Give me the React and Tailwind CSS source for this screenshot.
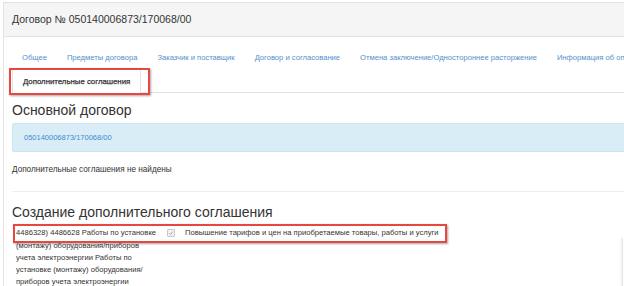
import React from 'react';

const tabs = [
    'Общее',
    'Предметы договора',
    'Заказчик и поставщик',
    'Договор и согласование',
    'Отмена заключение/Одностороннее расторжение',
    'Информация об оплате',
];

const itemLines = [
    '4486328) 4486628 Работы по установке',
    '(монтажу) оборудования/приборов',
    'учета электроэнергии Работы по',
    'установке (монтажу) оборудования/',
    'приборов учета электроэнергии',
];

function CheckMark() {
    return (
        <span className="inline-flex items-center justify-center w-[8px] h-[8px] border border-[#c8c8c8] bg-[#f2f2f2] rounded-[1px]">
            <svg viewBox="0 0 10 10" className="w-[6px] h-[6px]">
                <path d="M2 5.2 L4.2 7.4 L8 2.8" fill="none" stroke="#9a9a9a" strokeWidth="1.4" />
            </svg>
        </span>
    );
}

export default function App() {
    return (
        <div
            className="relative w-[624px] h-[286px] overflow-hidden bg-white text-[#333]"
            style={{ fontFamily: '"Liberation Sans", Arial, sans-serif' }}
        >
            <div className="ml-[3px] mt-[2px] w-[760px] h-[300px] border border-[#e3e3e3]">
                {/* Panel heading */}
                <div className="h-[34px] bg-[#f5f5f5] border-b border-[#e3e3e3] flex items-center pl-[8px] text-[10.5px] text-[#333]">
                    Договор № 050140006873/170068/00
                </div>

                {/* Panel body */}
                <div className="pl-[8px] pt-[10px]">
                    {/* Tabs */}
                    <div className="border-b border-[#e3e3e3]">
                        <div className="flex h-[22px] items-center text-[7.6px] text-[#5190cd] whitespace-nowrap">
                            {tabs.map((t) => (
                                <span key={t} className="px-[10px]">{t}</span>
                            ))}
                        </div>
                        <div className="flex h-[23px]">
                            <div className="relative -mb-px flex items-center px-[10px] bg-white border border-b-0 border-[#e3e3e3] text-[7.8px] text-[#333] [-webkit-text-stroke:0.25px_#333]">
                                Дополнительные соглашения
                                <div className="absolute -left-[4px] -top-[2px] w-[141px] h-[27px] border-2 border-[#e8473f] shadow-[1px_1px_2px_rgba(0,0,0,0.35)]" />
                            </div>
                        </div>
                    </div>

                    {/* Main contract */}
                    <h3 className="mt-[9px] text-[14px] leading-[17px] text-[#333]">Основной договор</h3>
                    <div className="mt-[4px] h-[29px] flex items-center pl-[11px] bg-[#d9edf7] border border-[#c8e6f1] rounded-l-[2px] text-[7.5px] text-[#3f8bcf]">
                        050140006873/170068/00
                    </div>
                    <p className="mt-[13px] text-[8.2px] leading-[10px] text-[#333]">Дополнительные соглашения не найдены</p>
                    <div className="mt-[16px] border-t border-[#eeeeee]" />

                    {/* Creation */}
                    <h3 className="mt-[12px] text-[14px] leading-[17px] text-[#333]">Создание дополнительного соглашения</h3>
                    <div className="relative mt-[5px] flex items-start text-[7.6px] leading-[12px] text-[#333]">
                        <div className="w-[150px] pl-[4px] pt-[1px] whitespace-nowrap">
                            {itemLines.map((l, i) => (
                                <div key={l} className={i === 0 ? 'mb-[1px]' : ''}>{l}</div>
                            ))}
                        </div>
                        <div className="pl-[5px] pt-[2px] flex items-center h-[12px]">
                            <CheckMark />
                        </div>
                        <div className="pl-[10px] pt-[1px]">
                            Повышение тарифов и цен на приобретаемые товары, работы и услуги
                        </div>
                        <div className="absolute left-[1px] -top-[2px] w-[434px] h-[19px] border-2 border-[#e8473f] shadow-[1px_1px_2px_rgba(0,0,0,0.35)]" />
                    </div>
                </div>
            </div>
            <div className="absolute left-[622px] top-[238px] w-px h-[48px] bg-[#e4e4e4] shadow-[-1px_0_2px_rgba(0,0,0,0.1)]" />
        </div>
    );
}
